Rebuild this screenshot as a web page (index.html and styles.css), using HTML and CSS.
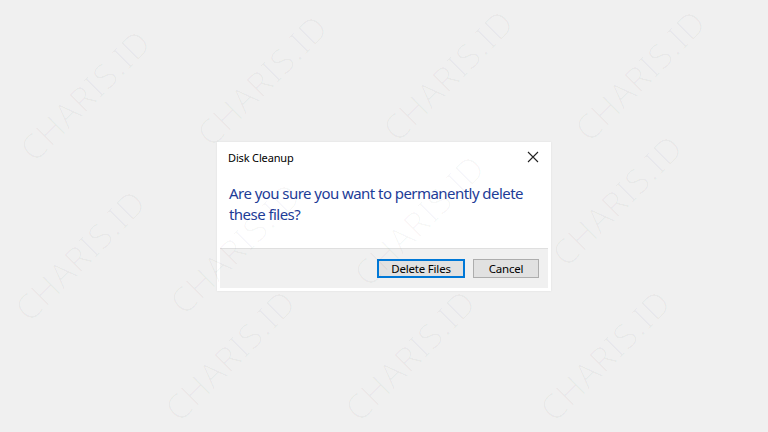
FILE: index.html
```html
<!DOCTYPE html>
<html lang="en">
<head>
<meta charset="utf-8">
<title>Disk Cleanup</title>
<link rel="stylesheet" href="styles.css">
</head>
<body>
<div class="screen">
  <div class="dialog">
    <div class="titlebar">
      <span class="title">Disk Cleanup</span>
      <svg class="close" width="12" height="12" viewBox="0 0 12 12"><path d="M1 1 L11 11 M11 1 L1 11" stroke="#222" stroke-width="1.1" fill="none"/></svg>
    </div>
    <div class="message">Are you sure you want to permanently delete these files?</div>
    <div class="footer">
      <button class="btn btn-default">Delete Files</button>
      <button class="btn">Cancel</button>
    </div>
  </div>
  <div class="watermarks">
    <span class="wm" style="left:85px;top:95px">CHARIS.ID</span>
    <span class="wm" style="left:262px;top:80px">CHARIS.ID</span>
    <span class="wm" style="left:448px;top:75px">CHARIS.ID</span>
    <span class="wm" style="left:640px;top:75px">CHARIS.ID</span>
    <span class="wm" style="left:80px;top:255px">CHARIS.ID</span>
    <span class="wm" style="left:235px;top:248px">CHARIS.ID</span>
    <span class="wm" style="left:419px;top:220px">CHARIS.ID</span>
    <span class="wm" style="left:617px;top:200px">CHARIS.ID</span>
    <span class="wm" style="left:230px;top:355px">CHARIS.ID</span>
    <span class="wm" style="left:410px;top:355px">CHARIS.ID</span>
    <span class="wm" style="left:605px;top:355px">CHARIS.ID</span>
  </div>
</div>
</body>
</html>
```
FILE: styles.css
```css
* { box-sizing: border-box; }
html, body { margin: 0; padding: 0; }
body {
  background: #f0f0f0;
  font-family: "Noto Sans", "Open Sans", sans-serif;
  width: 768px;
  height: 432px;
  overflow: hidden;
}
.screen {
  position: relative;
  width: 768px;
  height: 432px;
  display: flex;
  align-items: center;
  justify-content: center;
}
.dialog {
  width: 334px;
  height: 149px;
  background: #ffffff;
  box-shadow: 0 0 2px rgba(0,0,0,0.08);
  display: flex;
  flex-direction: column;
  padding: 0 3px 3px 3px;
}
.titlebar {
  height: 32px;
  display: flex;
  align-items: center;
  justify-content: space-between;
  padding: 0 9px 0 8px;
}
.title {
  font-size: 11px;
  color: #000;
  letter-spacing: -0.15px;
}
.close { display: block; margin-top: -1px; }
.message {
  padding: 9px 4px 0 9px;
  font-size: 15px;
  line-height: 21px;
  color: #1d3c97;
  letter-spacing: -0.55px;
  flex: 1;
}
.footer {
  height: 40px;
  background: #f0f0f0;
  border-top: 1px solid #dfdfdf;
  display: flex;
  justify-content: flex-end;
  align-items: center;
  gap: 8px;
  padding: 0 9px 0 0;
}
.btn {
  height: 19px;
  padding: 0;
  margin: 0;
  font-family: "Noto Sans", "Open Sans", sans-serif;
  font-size: 11.5px;
  letter-spacing: -0.2px;
  color: #000;
  background: #e1e1e1;
  border: 1px solid #adadad;
  width: 66px;
  line-height: 17px;
}
.btn-default {
  width: 88px;
  border: 2px solid #0078d7;
  line-height: 15px;
}
.watermarks {
  position: absolute;
  inset: 0;
  pointer-events: none;
  overflow: hidden;
}
.wm {
  position: absolute;
  transform: translate(-50%, -50%) rotate(-45deg);
  font-family: "Noto Sans", sans-serif;
  font-weight: 300;
  font-size: 34px;
  letter-spacing: 1px;
  color: rgba(0,0,0,0.03);
  white-space: nowrap;
}
```
